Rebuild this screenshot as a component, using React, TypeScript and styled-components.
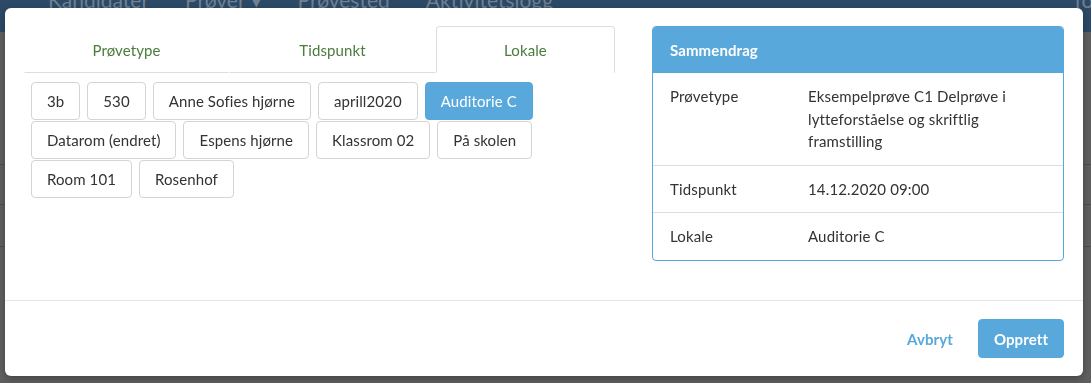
import React from "react";
import styled, { createGlobalStyle } from "styled-components";

const GlobalStyle = createGlobalStyle`
  html, body { margin: 0; padding: 0; }
  body {
    font-family: Lato, "Open Sans", "Liberation Sans", sans-serif;
    font-size: 15px;
    color: #333;
    background: #5e5e5e;
    overflow: hidden;
  }
  * { box-sizing: border-box; }
`;

const Page = styled.div`
  width: 1091px;
  height: 383px;
  display: flex;
  flex-direction: column;
  background: #606060;
`;

const Navbar = styled.div`
  height: 32px;
  background: #2c4a66;
  display: flex;
  align-items: flex-start;
  padding-left: 48px;
  gap: 36px;
  overflow: hidden;
`;

const NavLink = styled.span`
  font-size: 21px;
  line-height: 21px;
  margin-top: -11px;
  color: #6f8193;
  white-space: nowrap;
`;

const NavRight = styled(NavLink)`
  margin-left: auto;
  margin-right: -10px;
`;

const PageBody = styled.div`
  flex: 1;
  display: flex;
  flex-direction: column;
`;

const PageRow = styled.div<{ $h: number; $line?: boolean }>`
  height: ${(p) => p.$h}px;
  border-bottom: ${(p) => (p.$line ? "1px solid #4f4f4f" : "none")};
`;

const Overlay = styled.div`
  position: fixed;
  inset: 0;
  padding: 8px 8px 7px 5px;
  display: flex;
`;

const Modal = styled.div`
  flex: 1;
  background: #fff;
  border-radius: 6px;
  display: flex;
  flex-direction: column;
  box-shadow: 0 3px 9px rgba(0, 0, 0, 0.3);
`;

const ModalBody = styled.div`
  flex: 1;
  padding: 18px 19px;
  display: grid;
  grid-template-columns: 591px 412px;
  column-gap: 37px;
  align-items: start;
`;

const ModalFooter = styled.div`
  border-top: 1px solid #e5e5e5;
  padding: 18px 19px 18px 19px;
  display: flex;
  justify-content: flex-end;
  align-items: center;
  gap: 25px;
`;

const TabList = styled.div`
  display: flex;
`;

const Tab = styled.div<{ $w: number; $active?: boolean }>`
  width: ${(p) => p.$w}px;
  height: 47px;
  display: flex;
  align-items: center;
  justify-content: center;
  color: #4a7c3b;
  letter-spacing: 0.1px;
  line-height: 22px;
  border: 1px solid ${(p) => (p.$active ? "#ddd" : "transparent")};
  border-bottom: 1px solid ${(p) => (p.$active ? "transparent" : "#ddd")};
  border-radius: ${(p) => (p.$active ? "4px 4px 0 0" : "0")};
  padding-top: 1px;
`;

const ChoiceGrid = styled.div`
  display: flex;
  flex-wrap: wrap;
  gap: 1px 7px;
  margin-top: 9px;
  padding-left: 7px;
`;

const Choice = styled.button<{ $active?: boolean }>`
  font-family: inherit;
  font-size: 15px;
  letter-spacing: 0.1px;
  line-height: 22px;
  height: 38px;
  padding: 7px 15px;
  border-radius: 4px;
  border: 1px solid ${(p) => (p.$active ? "#59a8dc" : "#d4d4d4")};
  background: ${(p) => (p.$active ? "#59a8dc" : "#fff")};
  color: ${(p) => (p.$active ? "#fff" : "#333")};
  white-space: nowrap;
  cursor: pointer;
`;

const Panel = styled.div`
  border: 1px solid #59a8dc;
  border-radius: 4px;
  overflow: hidden;
`;

const PanelHeading = styled.div`
  background: #59a8dc;
  color: #fff;
  font-weight: 700;
  letter-spacing: 0.1px;
  line-height: 22px;
  padding: 12px 17px 12px 17px;
`;

const SummaryTable = styled.div`
  display: grid;
  grid-template-columns: 138px 1fr;
`;

const Cell = styled.div<{ $last?: boolean }>`
  padding: 12px 17px 12px 17px;
  line-height: 22.5px;
  letter-spacing: 0.15px;
  border-bottom: ${(p) => (p.$last ? "none" : "1px solid #ddd")};
`;

const LinkButton = styled.button`
  font-family: inherit;
  font-size: 15px;
  font-weight: 700;
  letter-spacing: 0.1px;
  background: none;
  border: none;
  padding: 0;
  color: #59a8dc;
  cursor: pointer;
`;

const PrimaryButton = styled.button`
  font-family: inherit;
  font-size: 15px;
  font-weight: 700;
  letter-spacing: 0.1px;
  height: 39px;
  width: 86px;
  border-radius: 4px;
  border: 1px solid #59a8dc;
  background: #59a8dc;
  color: #fff;
  cursor: pointer;
`;

const rooms = [
  "3b",
  "530",
  "Anne Sofies hjørne",
  "aprill2020",
  "Auditorie C",
  "Datarom (endret)",
  "Espens hjørne",
  "Klassrom 02",
  "På skolen",
  "Room 101",
  "Rosenhof",
];

const summary: [string, string][] = [
  ["Prøvetype", "Eksempelprøve C1 Delprøve i lytteforståelse og skriftlig framstilling"],
  ["Tidspunkt", "14.12.2020 09:00"],
  ["Lokale", "Auditorie C"],
];

export default function App() {
  return (
    <>
      <GlobalStyle />
      <Page>
        <Navbar>
          <NavLink>Kandidater</NavLink>
          <NavLink>Prøver ▾</NavLink>
          <NavLink>Prøvested</NavLink>
          <NavLink>Aktivitetslogg</NavLink>
          <NavRight>for</NavRight>
        </Navbar>
        <PageBody>
          <PageRow $h={133} $line />
          <PageRow $h={40} $line />
          <PageRow $h={42} $line />
        </PageBody>
      </Page>
      <Overlay>
        <Modal>
          <ModalBody>
            <div>
              <TabList>
                <Tab $w={205}>Prøvetype</Tab>
                <Tab $w={207}>Tidspunkt</Tab>
                <Tab $w={179} $active>
                  Lokale
                </Tab>
              </TabList>
              <ChoiceGrid>
                {rooms.map((r) => (
                  <Choice key={r} $active={r === "Auditorie C"}>
                    {r}
                  </Choice>
                ))}
              </ChoiceGrid>
            </div>
            <Panel>
              <PanelHeading>Sammendrag</PanelHeading>
              <SummaryTable>
                {summary.map(([k, v], i) => (
                  <React.Fragment key={k}>
                    <Cell $last={i === summary.length - 1}>{k}</Cell>
                    <Cell $last={i === summary.length - 1}>{v}</Cell>
                  </React.Fragment>
                ))}
              </SummaryTable>
            </Panel>
          </ModalBody>
          <ModalFooter>
            <LinkButton>Avbryt</LinkButton>
            <PrimaryButton>Opprett</PrimaryButton>
          </ModalFooter>
        </Modal>
      </Overlay>
    </>
  );
}
